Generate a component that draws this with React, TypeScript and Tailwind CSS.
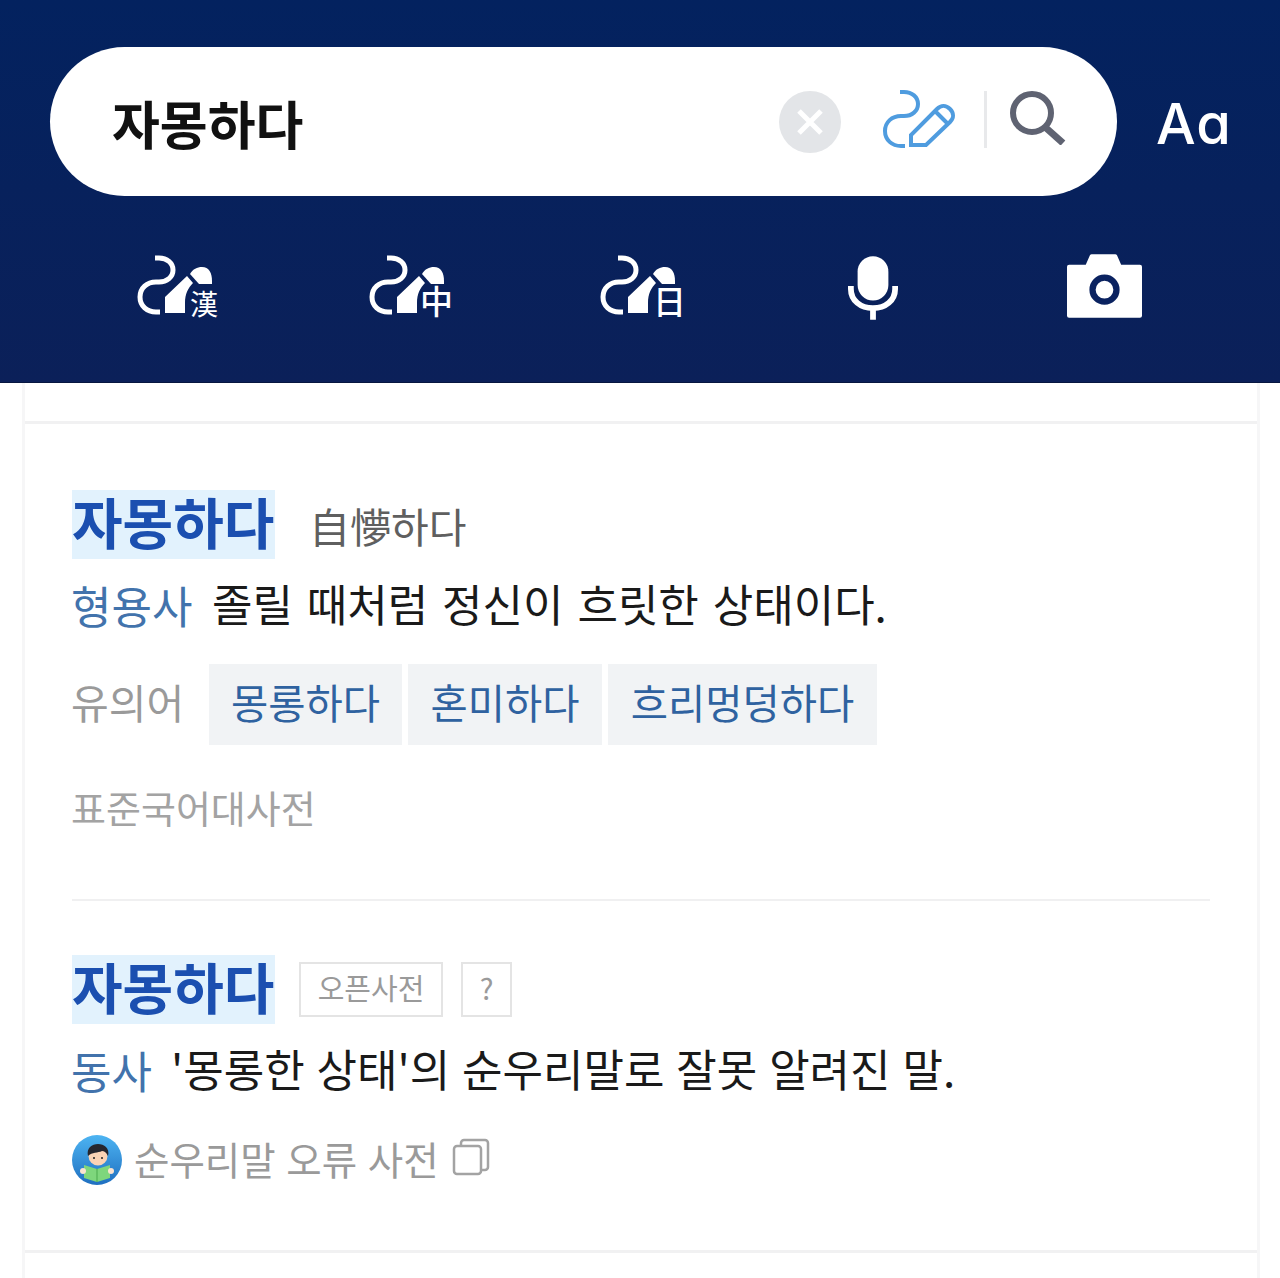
import React from 'react';

const Squiggle = ({ color, width = 5 }: { color: string; width?: number }) => (
  <path d="M20 3h4c8 0 14 5 14 12s-6 12-14 12h-3c-9 0-16 6-16 15s7 15 16 15h4" fill="none" stroke={color} strokeWidth={width} />
);

// squiggle + solid pencil + language letter
const HandIcon = ({ label, labelClass }: { label: string; labelClass: string }) => (
  <div className="relative w-[84px] h-[64px]">
    <svg viewBox="0 0 84 64" className="w-[84px] h-[64px]">
      <Squiggle color="#fff" />
      <path d="M30 58V42L52 21l6 7c-5 5-8 11-8 20v10z" fill="#fff" />
      <path d="M55 19c3-5 7-7 12-7 7 0 10 6 10 14v3H64z" fill="#fff" />
    </svg>
    <span className={labelClass}>{label}</span>
  </div>
);

export default function App() {
  return (
    <div className="w-[1280px] h-[1278px] overflow-hidden bg-white flex flex-col font-['Noto_Sans_CJK_KR','Noto_Sans',sans-serif]">
      {/* Header */}
      <header className="relative z-10 h-[383px] shrink-0 bg-gradient-to-b from-[#03225f] to-[#0b2059] border-b border-[#071740] flex flex-col">
        <div className="flex items-center pl-[50px] pt-[47px]">
          <div className="w-[1067px] h-[149px] rounded-full bg-white flex items-center pl-[62px]">
            <span className="text-[52px] font-bold text-[#111] leading-none w-[667px] mt-[3px] whitespace-nowrap">자몽하다</span>
            <div className="w-[62px] h-[62px] rounded-full bg-[#e3e5e8] flex items-center justify-center">
              <svg viewBox="0 0 28 28" className="w-[28px] h-[28px]">
                <path d="M3 3l22 22M25 3L3 25" stroke="#fff" strokeWidth="5" />
              </svg>
            </div>
            <svg viewBox="0 0 78 62" className="w-[78px] h-[62px] ml-[39px] mb-[4px]">
              <Squiggle color="#4f9cdf" width={4} />
              <path d="M31 56V46L57 20c4-4 9-4 13 0s4 9 0 13L46 56zM55 22l12 12" fill="none" stroke="#4f9cdf" strokeWidth="4" />
            </svg>
            <div className="w-[3px] h-[57px] bg-[#e8e9eb] ml-[26px] mb-[4px]" />
            <svg viewBox="0 0 56 54" className="w-[56px] h-[54px] ml-[23px] mb-[7px]">
              <circle cx="22" cy="22" r="19" fill="none" stroke="#5f6372" strokeWidth="6" />
              <path d="M35 36l18 16" stroke="#5f6372" strokeWidth="7" />
            </svg>
          </div>
          <span className="ml-[39px] mt-[4px] text-[56px] tracking-[1px] text-white leading-none font-medium font-['Inter',sans-serif] [font-feature-settings:'cv11']">Aa</span>
        </div>
        <div className="flex mt-[59px] pl-[135px]">
          <HandIcon label="漢" labelClass="absolute left-[55px] top-[30px] text-[28px] leading-[36px] text-white" />
          <div className="ml-[148px]">
            <HandIcon label="中" labelClass="absolute left-[53px] top-[25px] text-[33px] font-medium leading-[40px] text-white" />
          </div>
          <div className="ml-[147px]">
            <HandIcon label="日" labelClass="absolute left-[55px] top-[25px] text-[33px] font-medium leading-[40px] text-white" />
          </div>
          <svg viewBox="0 0 52 66" className="w-[50px] h-[66px] ml-[166px]">
            <rect x="10" y="0" width="32" height="46" rx="16" fill="#fff" />
            <path d="M3 31v3c0 12 10 20 23 20s23-8 23-20v-3M26 54v12" fill="none" stroke="#fff" strokeWidth="6" />
          </svg>
          <svg viewBox="2 1 72 61" className="w-[75px] h-[64px] ml-[169px] -mt-px">
            <path d="M2 13a2 2 0 0 1 2-2h16l4-9a2 2 0 0 1 2-1h22a2 2 0 0 1 2 1l4 9h18a2 2 0 0 1 2 2v47a2 2 0 0 1-2 2H4a2 2 0 0 1-2-2z" fill="#fff" />
            <circle cx="38" cy="35" r="11.5" fill="none" stroke="#0a2260" strokeWidth="6" />
          </svg>
        </div>
      </header>

      {/* Result card */}
      <main className="mx-[25px] w-[1232px] bg-white flex-1 shadow-[0_0_0_3px_#f6f6f7] flex flex-col">
        <div className="h-[41px] shrink-0 border-b-[3px] border-[#f1f1f2]" />
        <div className="px-[47px] flex-1">
          <section className="h-[477px] border-b-2 border-[#f0f0f1] pt-[66px]">
            <div className="flex items-end">
              <span className="h-[69px] w-[203px] bg-[#e2f2fd] text-[#1b4fb0] text-[55px] font-bold leading-[60px] whitespace-nowrap">자몽하다</span>
              <span className="ml-[34px] mb-[3px] text-[41px] leading-[62px] text-[#5f5f5f]">自懜하다</span>
            </div>
            <div className="flex items-center mt-[12px] h-[64px]">
              <span className="text-[44px] text-[#4273ac] leading-none w-[141px] -ml-px mt-[4px]">형용사</span>
              <span className="text-[44px] text-[#1a1a1a] leading-none [word-spacing:4px]">졸릴 때처럼 정신이 흐릿한 상태이다.</span>
            </div>
            <div className="flex items-center mt-[29px]">
              <span className="text-[41px] text-[#9a9a9a] leading-none w-[138px] -ml-px mb-[6px]">유의어</span>
              <div className="flex gap-[6px]">
                <span className="h-[81px] w-[193px] pb-[4px] bg-[#f1f3f5] text-[#2f62a0] text-[40.5px] flex items-center justify-center">몽롱하다</span>
                <span className="h-[81px] w-[194px] pb-[4px] bg-[#f1f3f5] text-[#2f62a0] text-[40.5px] flex items-center justify-center">혼미하다</span>
                <span className="h-[81px] w-[269px] pb-[4px] bg-[#f1f3f5] text-[#2f62a0] text-[40.5px] flex items-center justify-center">흐리멍덩하다</span>
              </div>
            </div>
            <div className="mt-[37px] -ml-px text-[38px] leading-[50px] text-[#a3a3a3]">표준국어대사전</div>
          </section>
          <section className="pt-[54px]">
            <div className="flex items-center">
              <span className="h-[69px] w-[203px] bg-[#e2f2fd] text-[#1b4fb0] text-[55px] font-bold leading-[60px] whitespace-nowrap">자몽하다</span>
              <span className="ml-[24px] h-[55px] w-[144px] pb-[3px] border-2 border-[#e4e4e4] text-[29px] text-[#9a9a9a] flex items-center justify-center">오픈사전</span>
              <span className="ml-[18px] h-[55px] w-[51px] pb-[3px] border-2 border-[#e4e4e4] text-[29px] text-[#9a9a9a] flex items-center justify-center">?</span>
            </div>
            <div className="flex items-center mt-[12px] h-[64px]">
              <span className="text-[44px] text-[#4273ac] leading-none w-[100px] -ml-px mt-[4px]">동사</span>
              <span className="text-[44px] text-[#1a1a1a] leading-none [word-spacing:2px]">'몽롱한 상태'의 순우리말로 잘못 알려진 말.</span>
            </div>
            <div className="flex items-center mt-[35px]">
              <svg viewBox="0 0 50 50" className="w-[50px] h-[50px]">
                <defs>
                  <linearGradient id="avatarBg" x1="0" y1="0" x2="0" y2="1">
                    <stop offset="0" stopColor="#4db4f2" />
                    <stop offset="1" stopColor="#1f6fc0" />
                  </linearGradient>
                </defs>
                <circle cx="25" cy="25" r="25" fill="url(#avatarBg)" />
                <circle cx="26" cy="21" r="9.5" fill="#fbd3b5" />
                <path d="M16 21c-2-8 4-12 10-12s12 4 10 12c-2-4-4-5-6-5-4 2-10 1-14 5z" fill="#26262e" />
                <circle cx="22" cy="23" r="1" fill="#222" />
                <circle cx="30" cy="23" r="1" fill="#222" />
                <path d="M12 30l13 4 13-4v13l-13 4-13-4z" fill="#7ed67c" />
                <path d="M25 34v13" stroke="#4ba94d" strokeWidth="1" />
                <circle cx="11" cy="36" r="3" fill="#fbe3d0" />
                <circle cx="39" cy="36" r="3" fill="#fbe3d0" />
              </svg>
              <span className="ml-[12px] mb-[3px] text-[38.5px] text-[#9a9a9a] leading-none [word-spacing:2px]">순우리말 오류 사전</span>
              <svg viewBox="0 0 38 38" className="w-[38px] h-[38px] ml-[13px] mb-[7px]">
                <rect x="2" y="8" width="27" height="28" rx="3" fill="none" stroke="#a3a3a3" strokeWidth="2.5" />
                <path d="M9 8V5a3 3 0 0 1 3-3h21a3 3 0 0 1 3 3v24a3 3 0 0 1-3 3h-4" fill="none" stroke="#a3a3a3" strokeWidth="2.5" />
              </svg>
            </div>
          </section>
        </div>
        <div className="h-[3px] shrink-0 bg-[#f1f1f2] mb-[25px]" />
      </main>
    </div>
  );
}
